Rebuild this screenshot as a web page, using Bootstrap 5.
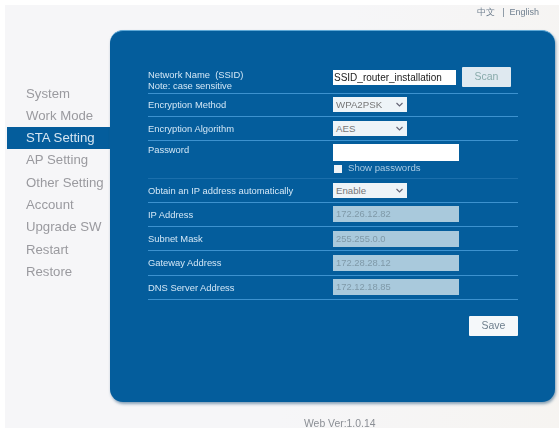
<!DOCTYPE html>
<html lang="en"><head><meta charset="utf-8"><title>STA Setting</title>
<link rel="stylesheet" href="https://cdn.jsdelivr.net/npm/bootstrap@5.3.0/dist/css/bootstrap.min.css">
<style>
html,body{height:429px;overflow:hidden;background:#fff}
body{font-family:"Liberation Sans",Arial,sans-serif}
.shell{height:429px;padding:5px 0 1px 5px;filter:blur(.6px)}
.canvas{height:423px;background:linear-gradient(100deg,#f6f6f8 55%,#f6f4f1);}
.langbar{flex:none;height:24.5px;padding-right:20px;font-size:9px;color:#6f7f8f;padding-top:1px}
.sidemenu{width:105px;padding-top:53px;padding-left:2px}
.sidemenu a{display:block;height:22.3px;line-height:22px;padding-left:19px;font-size:13.2px;color:#9a9a9f;text-decoration:none;white-space:nowrap}
.sidemenu a.on{background:#045d9c;color:#d5e6f2;font-weight:400}
.bluepanel{width:445px;height:372.5px;background:#045d9c;border-radius:13px;border-top:1px solid #5fa8d6;box-shadow:1px 2px 3px rgba(40,90,130,.55);padding:35px 37px 0 38px}
.frow{display:flex;border-bottom:1.5px solid #3d92cf;color:#d3e7f6;font-size:9.4px}
.frow .lbl{width:185px;flex:none;line-height:11px}
.r1{height:28px;padding-top:3px}
.r2{height:23.5px;align-items:center}
.r3{height:38px;padding-top:3px;border-bottom-color:#1b6fac}
.r4{height:24px;align-items:center}
.r5{height:24.4px;align-items:center}
.ti{height:15px;width:123px;margin-top:1px;background:#fff;border:0;padding:0 1px;font-size:10px;color:#222;line-height:15px}
.pw{width:126px;height:17px;background:#fff;border:0;display:block}
.off{width:126px;height:16px;background:#a9c9dc;border:0;padding:0 3px;font-size:9.4px;color:#7f99a8;line-height:16px}
.sel{appearance:none;width:74px;height:15px;border:0;padding:0 3px;font-size:9.7px;color:#777;background:#eef4f8;line-height:15px;position:relative;display:flex;align-items:center;justify-content:space-between}
.sel svg{width:7px;height:5px;margin-right:1px}
.scanb{width:49px;height:20px;margin-left:6px;margin-top:-2px;background:#dfe9f0;border:0;border-radius:1px;font-size:10.5px;color:#8aa;padding:0}
.savb{width:49px;height:20px;background:#f5f8fa;border:0;border-radius:1px;font-size:10.5px;color:#6e7f8d;padding:0}
.showp{font-size:9.6px;color:#a9cbe4;height:14px;margin-top:1px}
.tick{width:8px;height:8px;background:#eef3f7;display:block;margin-left:1px;margin-right:6px}
.foot{flex:none;font-size:10.4px;color:#8b8f95;padding-left:299px;padding-top:14px}
</style></head><body>
<div class="shell"><div class="canvas d-flex flex-column">
<div class="langbar d-flex justify-content-end align-items-start">中文&nbsp;&nbsp; | &nbsp;English</div>
<div class="d-flex flex-shrink-0">
<nav class="sidemenu">
<a href="#">System</a><a href="#">Work Mode</a><a href="#" class="on">STA Setting</a><a href="#">AP Setting</a><a href="#">Other Setting</a><a href="#">Account</a><a href="#">Upgrade SW</a><a href="#">Restart</a><a href="#">Restore</a>
</nav>
<main class="bluepanel">
<div class="frow r1"><div class="lbl">Network Name&nbsp; (SSID)<br>Note: case sensitive</div><div class="ti">SSID_router_installation</div><button class="scanb" type="button">Scan</button></div>
<div class="frow r2"><div class="lbl">Encryption Method</div><div class="sel">WPA2PSK<svg viewBox="0 0 7 5"><path d="M.5 1l3 3 3-3" fill="none" stroke="#667" stroke-width="1.2"/></svg></div></div>
<div class="frow r2"><div class="lbl">Encryption Algorithm</div><div class="sel">AES<svg viewBox="0 0 7 5"><path d="M.5 1l3 3 3-3" fill="none" stroke="#667" stroke-width="1.2"/></svg></div></div>
<div class="frow r3"><div class="lbl">Password</div><div><span class="pw"></span><div class="showp d-flex align-items-center"><span class="tick"></span>Show passwords</div></div></div>
<div class="frow r4"><div class="lbl">Obtain an IP address automatically</div><div class="sel">Enable<svg viewBox="0 0 7 5"><path d="M.5 1l3 3 3-3" fill="none" stroke="#667" stroke-width="1.2"/></svg></div></div>
<div class="frow r5"><div class="lbl">IP Address</div><div class="off">172.26.12.82</div></div>
<div class="frow r5"><div class="lbl">Subnet Mask</div><div class="off">255.255.0.0</div></div>
<div class="frow r5"><div class="lbl">Gateway Address</div><div class="off">172.28.28.12</div></div>
<div class="frow r5"><div class="lbl">DNS Server Address</div><div class="off">172.12.18.85</div></div>
<div class="d-flex justify-content-end mt-3"><button class="savb" type="button">Save</button></div>
</main>
</div>
<div class="foot">Web Ver:1.0.14</div>
</div></div>
</body></html>
